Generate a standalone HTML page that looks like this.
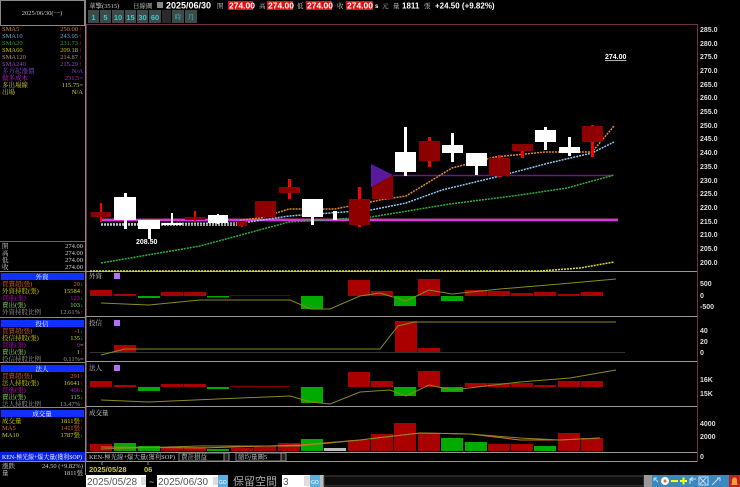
<!DOCTYPE html><html><head><meta charset="utf-8"><style>
html,body{margin:0;padding:0;background:#000;width:740px;height:487px;overflow:hidden}
svg{display:block;font-family:"Liberation Sans","Noto Sans CJK TC",sans-serif}
.s{font-family:"Liberation Serif","Noto Serif CJK SC",serif;font-size:6.5px}
</style></head><body>
<svg width="740" height="487" viewBox="0 0 740 487" xmlns="http://www.w3.org/2000/svg">
<rect width="740" height="487" fill="#000"/>
<rect x="0.5" y="0.5" width="84" height="25" fill="none" stroke="#888"/>
<line x1="85.5" y1="0" x2="85.5" y2="475" stroke="#888"/>
<text x="42" y="15" class="s" fill="#ccc" text-anchor="middle">2025/06/30(一)</text>
<g class="s">
<text x="2" y="31" fill="#d08030">SMA5</text><text x="78" y="31" fill="#d08030" text-anchor="end">250.00</text><text x="79" y="31" fill="#f22">↑</text>
<text x="2" y="38" fill="#70a8d8">SMA10</text><text x="78" y="38" fill="#70a8d8" text-anchor="end">243.95</text><text x="79" y="38" fill="#f22">↑</text>
<text x="2" y="45" fill="#30a030">SMA20</text><text x="78" y="45" fill="#30a030" text-anchor="end">231.73</text><text x="79" y="45" fill="#f22">↑</text>
<text x="2" y="52" fill="#c8c800">SMA60</text><text x="78" y="52" fill="#c8c800" text-anchor="end">209.18</text><text x="79" y="52" fill="#f22">↑</text>
<text x="2" y="59" fill="#b09070">SMA120</text><text x="78" y="59" fill="#b09070" text-anchor="end">214.87</text><text x="79" y="59" fill="#f22">↑</text>
<text x="2" y="66" fill="#a040d0">SMA240</text><text x="78" y="66" fill="#a040d0" text-anchor="end">215.29</text><text x="79" y="66" fill="#f22">↑</text>
<text x="2" y="73" fill="#8040e0">多方起漲價</text><text x="83" y="73" fill="#8040e0" text-anchor="end">N/A</text>
<text x="2" y="80" fill="#d020d0">做多成本</text><text x="83" y="80" fill="#d020d0" text-anchor="end">231.5=</text>
<text x="2" y="87" fill="#d0d040">多出場線</text><text x="83" y="87" fill="#d0d040" text-anchor="end">115.75=</text>
<text x="2" y="94" fill="#d0d040">出場</text><text x="83" y="94" fill="#d0d040" text-anchor="end">N/A</text>
</g>
<line x1="0" y1="241.5" x2="85" y2="241.5" stroke="#666"/>
<g class="s" fill="#ccc">
<text x="2" y="248">開</text><text x="83" y="248" text-anchor="end">274.00</text>
<text x="2" y="255">高</text><text x="83" y="255" text-anchor="end">274.00</text>
<text x="2" y="262">低</text><text x="83" y="262" text-anchor="end">274.00</text>
<text x="2" y="269">收</text><text x="83" y="269" text-anchor="end">274.00</text>
</g>
<line x1="0" y1="271.5" x2="85" y2="271.5" stroke="#888"/>
<rect x="1" y="273" width="83" height="7" fill="#1030ff"/><text x="42" y="279" class="s" fill="#fff" text-anchor="middle">外資</text>
<g class="s">
<text x="2" y="286" fill="#e06030">買賣超(張)</text><text x="80" y="286" fill="#e06030" text-anchor="end">20</text><text x="80" y="286" fill="#2c2">↓</text>
<text x="2" y="293" fill="#d0d000">外資持股(張)</text><text x="80" y="293" fill="#d0d000" text-anchor="end">15584</text><text x="80" y="293" fill="#f22">↑</text>
<text x="2" y="300" fill="#c000c0">買進(張)</text><text x="80" y="300" fill="#c000c0" text-anchor="end">123</text><text x="80" y="300" fill="#2c2">↓</text>
<text x="2" y="307" fill="#90e060">賣出(張)</text><text x="80" y="307" fill="#90e060" text-anchor="end">103</text><text x="80" y="307" fill="#2c2">↓</text>
<text x="2" y="314" fill="#999">外資持股比例</text><text x="80" y="314" fill="#999" text-anchor="end">12.61%</text><text x="80" y="314" fill="#f22">↑</text>
</g>
<line x1="0" y1="317.5" x2="85" y2="317.5" stroke="#888"/>
<rect x="1" y="320" width="83" height="7" fill="#1030ff"/><text x="42" y="326" class="s" fill="#fff" text-anchor="middle">投信</text>
<g class="s">
<text x="2" y="333" fill="#e06030">買賣超(張)</text><text x="80" y="333" fill="#e06030" text-anchor="end">-1</text><text x="80" y="333" fill="#2c2">↓</text>
<text x="2" y="340" fill="#d0d000">投信持股(張)</text><text x="80" y="340" fill="#d0d000" text-anchor="end">135</text><text x="80" y="340" fill="#2c2">↓</text>
<text x="2" y="347" fill="#c000c0">買進(張)</text><text x="80" y="347" fill="#c000c0" text-anchor="end">0</text><text x="80" y="347" fill="#ccc">=</text>
<text x="2" y="354" fill="#90e060">賣出(張)</text><text x="80" y="354" fill="#90e060" text-anchor="end">1</text><text x="80" y="354" fill="#f22">↑</text>
<text x="2" y="361" fill="#999">投信持股比例</text><text x="80" y="361" fill="#999" text-anchor="end">0.11%</text><text x="80" y="361" fill="#ccc">=</text>
</g>
<line x1="0" y1="362.5" x2="85" y2="362.5" stroke="#888"/>
<rect x="1" y="365" width="83" height="7" fill="#1030ff"/><text x="42" y="371" class="s" fill="#fff" text-anchor="middle">法人</text>
<g class="s">
<text x="2" y="378" fill="#e06030">買賣超(張)</text><text x="80" y="378" fill="#e06030" text-anchor="end">291</text><text x="80" y="378" fill="#f22">↑</text>
<text x="2" y="385" fill="#d0d000">法人持股(張)</text><text x="80" y="385" fill="#d0d000" text-anchor="end">16641</text><text x="80" y="385" fill="#f22">↑</text>
<text x="2" y="392" fill="#c000c0">買進(張)</text><text x="80" y="392" fill="#c000c0" text-anchor="end">406</text><text x="80" y="392" fill="#2c2">↓</text>
<text x="2" y="399" fill="#90e060">賣出(張)</text><text x="80" y="399" fill="#90e060" text-anchor="end">115</text><text x="80" y="399" fill="#2c2">↓</text>
<text x="2" y="406" fill="#999">法人持股比例</text><text x="80" y="406" fill="#999" text-anchor="end">13.47%</text><text x="80" y="406" fill="#f22">↑</text>
</g>
<line x1="0" y1="407.5" x2="85" y2="407.5" stroke="#888"/>
<rect x="1" y="410" width="83" height="7" fill="#1030ff"/><text x="42" y="416" class="s" fill="#fff" text-anchor="middle">成交量</text>
<g class="s">
<text x="2" y="423" fill="#d0d000">成交量</text><text x="80" y="423" fill="#d0d000" text-anchor="end">1811張</text><text x="80" y="423" fill="#f22">↑</text>
<text x="2" y="430" fill="#e06030">MA5</text><text x="80" y="430" fill="#e06030" text-anchor="end">1411張</text><text x="80" y="430" fill="#f22">↑</text>
<text x="2" y="437" fill="#d0d000">MA10</text><text x="80" y="437" fill="#d0d000" text-anchor="end">1787張</text><text x="80" y="437" fill="#2c2">↓</text>
</g>
<rect x="0" y="452" width="85" height="9" fill="#0a20e0"/><text x="2" y="459" class="s" fill="#fff" textLength="80" lengthAdjust="spacingAndGlyphs">KEN-極光線+爆大量(獲利SOP)</text>
<line x1="0" y1="461.5" x2="85" y2="461.5" stroke="#888"/>
<g class="s" fill="#ccc"><text x="2" y="468">漲跌</text><text x="83" y="468" text-anchor="end">24.50 (+9.82%)</text>
<text x="2" y="475">量</text><text x="83" y="475" text-anchor="end">1811張</text></g>

<g font-size="7">
<text x="89" y="8" class="s" fill="#ccc">華擎(3515)</text>
<text x="133" y="8" class="s" fill="#ccc">日線圖</text>
<rect x="157" y="2" width="6" height="6" fill="#888"/>
<text x="166" y="8.5" fill="#fff" font-weight="bold" font-size="9">2025/06/30</text>
<text x="217" y="8" class="s" fill="#ccc">開</text><rect x="228" y="1" width="25" height="9" fill="#e01010"/><text x="229" y="8.5" fill="#fff" font-weight="bold" font-size="8.5">274.00</text>
<text x="259" y="8" class="s" fill="#ccc">高</text><rect x="267" y="1" width="26" height="9" fill="#e01010"/><text x="268" y="8.5" fill="#fff" font-weight="bold" font-size="8.5">274.00</text>
<text x="297" y="8" class="s" fill="#ccc">低</text><rect x="306" y="1" width="26" height="9" fill="#e01010"/><text x="307" y="8.5" fill="#fff" font-weight="bold" font-size="8.5">274.00</text>
<text x="337" y="8" class="s" fill="#ccc">收</text><rect x="346" y="1" width="27" height="9" fill="#e01010"/><text x="347" y="8.5" fill="#fff" font-weight="bold" font-size="8.5">274.00</text>
<text x="375" y="8" fill="#fff" font-weight="bold" font-size="6">s</text><text x="382" y="8" class="s" fill="#ccc">元</text>
<text x="393" y="8" class="s" fill="#ccc">量</text>
<text x="402" y="8.5" fill="#fff" font-weight="bold" font-size="8">1811</text><text x="424" y="8" class="s" fill="#ccc">張</text>
<text x="435" y="8.5" fill="#fff" font-weight="bold" font-size="8">+24.50 (+9.82%)</text>
</g>
<g font-size="7.5" font-weight="bold" fill="#3cc">
<rect x="88" y="10" width="11" height="13" fill="#3c4a4a"/><text x="93.5" y="20" text-anchor="middle">1</text>
<rect x="100" y="10" width="11" height="13" fill="#3c4a4a"/><text x="105.5" y="20" text-anchor="middle">5</text>
<rect x="112" y="10" width="12" height="13" fill="#3c4a4a"/><text x="118" y="20" text-anchor="middle">10</text>
<rect x="125" y="10" width="11" height="13" fill="#3c4a4a"/><text x="130.5" y="20" text-anchor="middle">15</text>
<rect x="137" y="10" width="11" height="13" fill="#3c4a4a"/><text x="142.5" y="20" text-anchor="middle">30</text>
<rect x="149" y="10" width="12" height="13" fill="#3c4a4a"/><text x="155" y="20" text-anchor="middle">60</text>
<rect x="162" y="10" width="9" height="13" fill="#2a2a2a"/>
<rect x="172" y="10" width="12" height="13" fill="#3c4a4a"/><text x="178" y="19" text-anchor="middle" class="s" font-weight="normal">時</text>
<rect x="185" y="10" width="12" height="13" fill="#3c4a4a"/><text x="191" y="19" text-anchor="middle" class="s" font-weight="normal">月</text>
</g>
<polyline points="86,24.5 690,24.5 697,24.5" fill="none" stroke="#703048"/>
<line x1="697.5" y1="24" x2="697.5" y2="462" stroke="#703048"/>
<line x1="86.5" y1="24" x2="86.5" y2="462" stroke="#703048"/>
<g stroke="#999"><line x1="86" y1="271.5" x2="697" y2="271.5"/><line x1="86" y1="316.5" x2="697" y2="316.5"/><line x1="86" y1="361.5" x2="697" y2="361.5"/><line x1="86" y1="406.5" x2="697" y2="406.5"/><line x1="86" y1="452.5" x2="697" y2="452.5"/><line x1="86" y1="461.5" x2="697" y2="461.5"/></g>
<g font-size="7" fill="#ddd" font-weight="bold">
<text x="700" y="32">285.0</text><text x="700" y="46">280.0</text><text x="700" y="59">275.0</text><text x="700" y="73">270.0</text><text x="700" y="87">265.0</text><text x="700" y="100">260.0</text><text x="700" y="114">255.0</text><text x="700" y="128">250.0</text><text x="700" y="141">245.0</text><text x="700" y="155">240.0</text><text x="700" y="169">235.0</text><text x="700" y="183">230.0</text><text x="700" y="196">225.0</text><text x="700" y="210">220.0</text><text x="700" y="224">215.0</text><text x="700" y="237">210.0</text><text x="700" y="251">205.0</text><text x="700" y="265">200.0</text>
<text x="700" y="286">500</text><text x="700" y="298">0</text><text x="700" y="309">-500</text>
<text x="700" y="333">40</text><text x="700" y="344">20</text><text x="700" y="355">0</text>
<text x="700" y="382">16K</text><text x="700" y="396">15K</text>
<text x="700" y="426">4000</text><text x="700" y="439">2000</text><text x="700" y="459">0</text>
</g>
<text x="605" y="59" font-size="7" fill="#fff" font-weight="bold" text-decoration="underline">274.00</text>
<line x1="100" y1="219" x2="618" y2="219" stroke="#8a5030" stroke-width="1"/>
<line x1="100" y1="220" x2="618" y2="220" stroke="#e030e0" stroke-width="2.5"/>
<line x1="393" y1="175.5" x2="612" y2="175.5" stroke="#6a1a8a" stroke-width="1.5"/>
<g fill="none" stroke-width="1.5" stroke-dasharray="2,1">
<polyline stroke="#e08a30" points="240,220 260,218 289,209 335,209 380,200 406,196 452,168 495,157 545,152 592,152 614,126"/>
<polyline stroke="#90c8f0" points="101,224 242,223 289,216 371,210 406,203 442,190 496,177 549,163 592,153 614,142"/>
<polyline stroke="#30b040" points="101,263 200,246 289,222 371,217 450,204 520,195 567,188 614,175"/>
<polyline stroke="#e0e030" points="90,271 540,271 580,268 614,262"/>
<polyline stroke="#ccc" points="101,225 240,225"/>
</g>
<g>
<g fill="#8e0000" stroke="none">
<rect x="100" y="203" width="2" height="19" fill="#f00"/><rect x="91" y="212" width="20" height="5"/>
<rect x="194" y="211" width="2" height="11" fill="#f00"/><rect x="185" y="217" width="20" height="3"/>
<rect x="241" y="222" width="2" height="5" fill="#f00"/><rect x="237" y="222" width="10" height="4"/>
<rect x="255" y="201" width="21" height="16"/>
<rect x="288" y="179" width="3" height="20" fill="#f00"/><rect x="279" y="187" width="21" height="6"/>
<rect x="358" y="187" width="3" height="40" fill="#f00"/><rect x="349" y="199" width="21" height="26"/>
<rect x="372" y="176" width="21" height="23"/>
<rect x="428" y="137" width="3" height="30" fill="#f00"/><rect x="419" y="141" width="21" height="20"/>
<rect x="498" y="155" width="3" height="22" fill="#f00"/><rect x="489" y="158" width="21" height="18"/>
<rect x="521" y="144" width="3" height="14" fill="#f00"/><rect x="512" y="144" width="21" height="7"/>
<rect x="591" y="125" width="3" height="32" fill="#f00"/><rect x="582" y="126" width="21" height="16"/>
</g>
<polygon points="371,164 393,175 371,187" fill="#5a1aa0"/>
<g fill="#fff">
<rect x="124" y="193" width="3" height="36"/><rect x="114" y="197" width="22" height="23"/>
<rect x="148" y="220" width="3" height="19"/><rect x="138" y="220" width="22" height="9"/>
<rect x="171" y="213" width="2" height="12"/><rect x="162" y="223" width="20" height="2"/>
<rect x="217" y="214" width="2" height="10"/><rect x="208" y="215" width="20" height="8"/>
<rect x="311" y="199" width="3" height="26"/><rect x="302" y="199" width="21" height="18"/>
<rect x="333" y="211" width="4" height="9"/>
<rect x="404" y="127" width="3" height="49"/><rect x="395" y="152" width="21" height="20"/>
<rect x="451" y="133" width="3" height="29"/><rect x="442" y="145" width="21" height="8"/>
<rect x="475" y="153" width="3" height="22"/><rect x="466" y="153" width="21" height="13"/>
<rect x="544" y="127" width="3" height="23"/><rect x="535" y="130" width="21" height="12"/>
<rect x="568" y="137" width="3" height="19"/><rect x="559" y="147" width="21" height="6"/>
</g>
</g>
<text x="136" y="244" font-size="7" fill="#fff" font-weight="bold">208.50</text>
<g class="s" fill="#ccc"><text x="89" y="278">外資</text><text x="89" y="325">投信</text><text x="89" y="370">法人</text><text x="89" y="415">成交量</text></g>
<g fill="#b070f0"><rect x="114" y="273" width="6" height="6"/><rect x="114" y="320" width="6" height="6"/><rect x="114" y="365" width="6" height="6"/></g>
<g>
<rect x="90" y="290" width="22" height="6" fill="#a00"/><rect x="114" y="294" width="22" height="2" fill="#a00"/><rect x="138" y="296" width="22" height="2" fill="#0a0"/><rect x="161" y="292" width="22" height="4" fill="#a00"/><rect x="184" y="292" width="22" height="4" fill="#a00"/><rect x="207" y="296" width="22" height="1.5" fill="#0a0"/><rect x="230" y="295" width="60" height="1" fill="#600"/>
<rect x="301" y="296" width="22" height="13" fill="#0a0"/><rect x="348" y="280" width="22" height="16" fill="#a00"/><rect x="371" y="291" width="22" height="5" fill="#a00"/><rect x="394" y="296" width="22" height="10" fill="#0a0"/><rect x="418" y="279" width="22" height="17" fill="#a00"/><rect x="441" y="296" width="22" height="5" fill="#0a0"/><rect x="465" y="290" width="22" height="6" fill="#a00"/><rect x="488" y="291" width="22" height="5" fill="#a00"/><rect x="511" y="293" width="22" height="3" fill="#a00"/><rect x="534" y="292" width="22" height="4" fill="#a00"/><rect x="558" y="294" width="22" height="2" fill="#a00"/><rect x="581" y="292" width="22" height="4" fill="#a00"/>
<polyline fill="none" stroke="#8a8a20" points="101,303 149,305 200,300 290,300 311,309 330,309 360,296 380,293 406,301 429,290 452,294 500,289 560,284 616,279"/>
</g>
<line x1="90" y1="352.5" x2="625" y2="352.5" stroke="#333"/>
<rect x="114" y="345" width="22" height="7" fill="#a00"/><rect x="395" y="321" width="22" height="31" fill="#a00"/><rect x="418" y="348" width="22" height="4" fill="#a00"/>
<polyline fill="none" stroke="#8a8a20" points="101,355 125,349 380,349 398,326 414,322 616,322"/>
<g>
<rect x="90" y="381" width="22" height="6" fill="#a00"/><rect x="114" y="385" width="22" height="2" fill="#a00"/><rect x="138" y="387" width="22" height="4" fill="#0a0"/><rect x="161" y="384" width="22" height="3" fill="#a00"/><rect x="184" y="384" width="22" height="3" fill="#a00"/><rect x="207" y="387" width="22" height="2" fill="#0a0"/><rect x="230" y="386" width="60" height="1" fill="#800"/>
<rect x="301" y="387" width="22" height="16" fill="#0a0"/><rect x="348" y="372" width="22" height="15" fill="#a00"/><rect x="371" y="381" width="22" height="6" fill="#a00"/><rect x="394" y="387" width="22" height="9" fill="#0a0"/><rect x="418" y="371" width="22" height="16" fill="#a00"/><rect x="441" y="387" width="22" height="5" fill="#0a0"/><rect x="465" y="383" width="22" height="4" fill="#a00"/><rect x="488" y="383" width="22" height="4" fill="#a00"/><rect x="511" y="383" width="22" height="4" fill="#a00"/><rect x="534" y="385" width="22" height="2" fill="#a00"/><rect x="558" y="381" width="22" height="6" fill="#a00"/><rect x="581" y="381" width="22" height="6" fill="#a00"/>
<polyline fill="none" stroke="#8a8a20" points="101,400 149,402 240,398 290,396 311,402 330,404 360,392 390,390 406,396 429,385 452,390 520,382 570,378 616,370"/>
</g>
<g>
<rect x="90" y="444" width="22" height="7" fill="#a00"/><rect x="114" y="443" width="22" height="8" fill="#0a0"/><rect x="138" y="446" width="22" height="5" fill="#0a0"/><rect x="161" y="447" width="22" height="4" fill="#a00"/><rect x="184" y="447" width="22" height="4" fill="#a00"/><rect x="207" y="449" width="22" height="2" fill="#0a0"/><rect x="231" y="448" width="22" height="3" fill="#a00"/><rect x="254" y="446" width="22" height="5" fill="#a00"/><rect x="278" y="443" width="22" height="8" fill="#a00"/><rect x="301" y="439" width="22" height="12" fill="#0a0"/><rect x="324" y="448" width="22" height="3" fill="#bbb"/><rect x="348" y="440" width="22" height="11" fill="#a00"/><rect x="371" y="434" width="22" height="17" fill="#a00"/><rect x="394" y="423" width="22" height="28" fill="#a00"/><rect x="418" y="433" width="22" height="18" fill="#a00"/><rect x="441" y="438" width="22" height="13" fill="#0a0"/><rect x="465" y="442" width="22" height="9" fill="#0a0"/><rect x="488" y="444" width="22" height="7" fill="#a00"/><rect x="511" y="444" width="22" height="7" fill="#a00"/><rect x="534" y="446" width="22" height="5" fill="#0a0"/><rect x="558" y="433" width="22" height="18" fill="#a00"/><rect x="581" y="438" width="22" height="13" fill="#a00"/>
<polyline fill="none" stroke="#e07030" points="101,447 200,448 300,445 360,440 420,433 470,434 520,440 560,440 600,438"/>
<polyline fill="none" stroke="#8a8a20" points="101,449 200,446 300,446 360,440 420,433 470,434 520,438 560,440 600,438"/>
</g>
<text x="89" y="459" class="s" fill="#ccc" textLength="86" lengthAdjust="spacingAndGlyphs">KEN-極光線+爆大量(獲利SOP)</text>
<rect x="179" y="453" width="50" height="8" fill="none" stroke="#888"/><text x="181" y="459" class="s" fill="#ccc">費計損益</text><rect x="224" y="453" width="5" height="8" fill="#222" stroke="#888"/>
<rect x="236" y="453" width="50" height="8" fill="none" stroke="#888"/><text x="238" y="459" class="s" fill="#ccc">縮均量圖5</text><rect x="281" y="453" width="5" height="8" fill="#222" stroke="#888"/>
<line x1="102" y1="462" x2="102" y2="465" stroke="#888"/><line x1="148" y1="462" x2="148" y2="465" stroke="#888"/>
<text x="89" y="472" font-size="7.5" fill="#c8c840" font-weight="bold">2025/05/28</text>
<text x="144" y="472" font-size="7.5" fill="#c8c840" font-weight="bold">06</text>
<rect x="86" y="475" width="60" height="12" fill="#fff"/><text x="87" y="485" font-size="10" fill="#555">2025/05/28</text><rect x="141" y="477" width="5" height="8" fill="#ddd"/>
<text x="149" y="485" font-size="9" fill="#ccc">~</text>
<rect x="157" y="475" width="61" height="12" fill="#fff"/><text x="158" y="485" font-size="10" fill="#555">2025/06/30</text><rect x="213" y="477" width="5" height="8" fill="#ddd"/>
<rect x="218" y="475" width="10" height="12" fill="#5ab0e0"/><text x="219" y="484" font-size="5" fill="#fff">GO</text>
<text x="233" y="485" font-size="11" fill="#aaa" font-family="'Noto Sans CJK TC',sans-serif">保留空間</text>
<rect x="282" y="475" width="28" height="12" fill="#fff"/><text x="283" y="485" font-size="10" fill="#555">3</text><rect x="304" y="476" width="6" height="10" fill="#ddd"/>
<rect x="310" y="475" width="10" height="12" fill="#5ab0e0"/><text x="311" y="484" font-size="5" fill="#fff">GO</text>
<rect x="320" y="475" width="4" height="12" fill="#bbb"/>
<rect x="324" y="476" width="320" height="10" fill="#0e0e0e" stroke="#444"/>
<rect x="644" y="475" width="8" height="12" fill="#999"/>
<rect x="652" y="475" width="77" height="12" fill="#3a88c0"/>
<path d="M654 478 l4 4 M654 478 h3 M654 478 v3" stroke="#cde" fill="none"/>
<circle cx="665" cy="481" r="4" fill="#fff"/><circle cx="665" cy="481" r="1.5" fill="#e07020"/>
<g fill="#ff0"><rect x="671" y="480" width="7" height="2"/><rect x="680" y="480" width="7" height="2"/><rect x="682.5" y="477.5" width="2" height="7"/></g>
<path d="M690 484 v-5 h6 M693 477 l-3 2 3 2" stroke="#cde" fill="none"/>
<path d="M700 478 l6 6 M706 478 l-6 6" stroke="#cde" fill="none"/>
<rect x="699" y="477" width="9" height="8" fill="none" stroke="#cde"/>
<path d="M712 485 l7-7 M717 478 h3 v3" stroke="#cde" fill="none"/>
<rect x="729" y="475" width="11" height="12" fill="#c02020"/><path d="M731 485 h7 l-1-2 v-3 a2.5 2.5 0 0 0 -5 0 v3z" fill="#f0a030"/>
</svg>
</body></html>
